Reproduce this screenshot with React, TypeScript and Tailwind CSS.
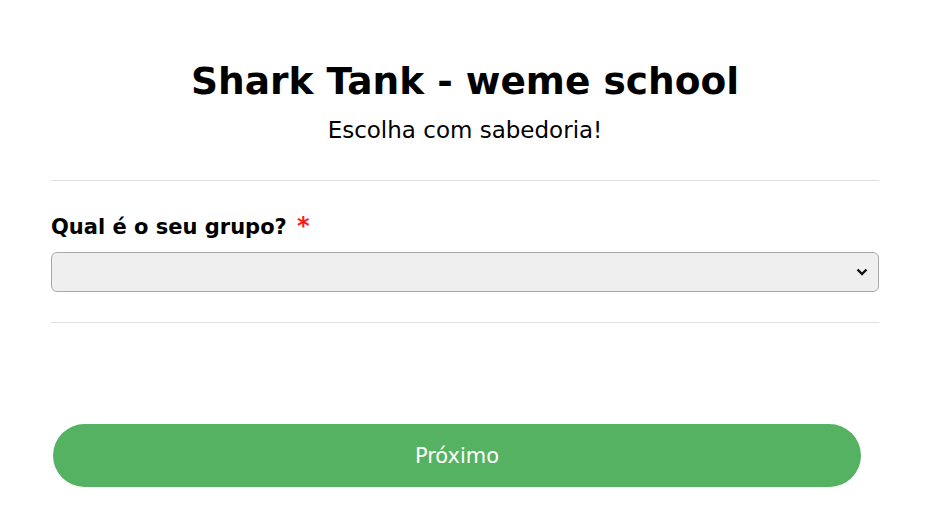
import React from "react";

export default function App() {
  return (
    <div className="w-[930px] h-[526px] bg-white" style={{ fontFamily: '"DejaVu Sans", Verdana, sans-serif' }}>
      <div className="px-[51px] pt-[59px]">
        <h1 className="text-center text-[37.5px] font-bold leading-[44px] text-black">Shark Tank - weme school</h1>
        <p className="text-center text-[23px] leading-[30px] mt-[12px] text-black">Escolha com sabedoria!</p>
        <div className="mt-[35px] h-px bg-[#e0e0e0]" />
        <div className="mt-[31px] h-[28px] text-[21px] font-bold leading-[28px] text-black">
          Qual é o seu grupo? <span className="ml-[3px] text-[24px] leading-[28px] text-[#ff1a1a]">*</span>
        </div>
        <div className="mt-[12px] relative h-[40px] rounded-[6px] border border-[#a8a8a8] bg-[#efefef] flex items-center justify-end pr-[10px]">
          <svg width="12" height="8" viewBox="0 0 12 8">
            <path d="M1.5 1.5 L6 6 L10.5 1.5" fill="none" stroke="#111" strokeWidth="2.4" />
          </svg>
        </div>
        <div className="mt-[30px] h-px bg-[#e0e0e0]" />
        <div className="mt-[101px] pl-[2px] pr-[18px]">
          <button className="w-full h-[63px] rounded-full bg-[#55b262] text-white text-[21px] pt-[2px]" style={{ fontFamily: '"DejaVu Sans", Verdana, sans-serif' }}>
            Próximo
          </button>
        </div>
      </div>
    </div>
  );
}
